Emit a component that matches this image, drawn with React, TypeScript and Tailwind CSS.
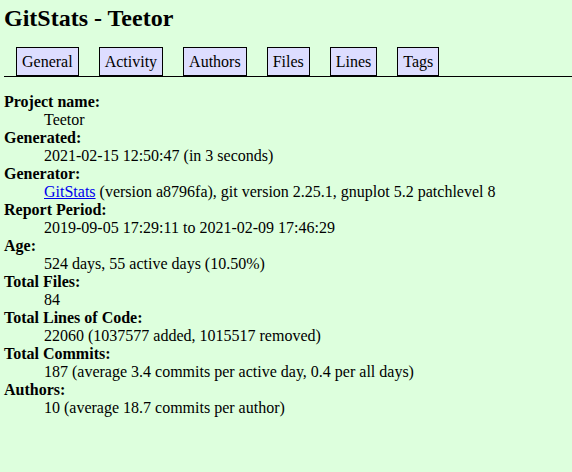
import React from "react";

const tabs = ["General", "Activity", "Authors", "Files", "Lines", "Tags"];

const Link = () => (
  <a href="#gitstats" className="text-[#0000ee] underline">
    GitStats
  </a>
);

const facts: { label: string; value: React.ReactNode }[] = [
  { label: "Project name:", value: "Teetor" },
  { label: "Generated:", value: "2021-02-15 12:50:47 (in 3 seconds)" },
  {
    label: "Generator:",
    value: (
      <>
        <Link /> (version a8796fa), git version 2.25.1, gnuplot 5.2 patchlevel 8
      </>
    ),
  },
  { label: "Report Period:", value: "2019-09-05 17:29:11 to 2021-02-09 17:46:29" },
  { label: "Age:", value: "524 days, 55 active days (10.50%)" },
  { label: "Total Files:", value: "84" },
  { label: "Total Lines of Code:", value: "22060 (1037577 added, 1015517 removed)" },
  { label: "Total Commits:", value: "187 (average 3.4 commits per active day, 0.4 per all days)" },
  { label: "Authors:", value: "10 (average 18.7 commits per author)" },
];

export default function App() {
  return (
    <div className="min-h-screen bg-[#ddffdd] pt-1 font-['Liberation_Serif',serif] text-base text-black">
      <h1 className="px-1 text-2xl leading-7 font-bold">GitStats - Teetor</h1>
      <nav className="mt-[15px] ml-1 border-b border-black pl-3">
        <ul className="flex flex-wrap gap-5">
          {tabs.map((tab) => (
            <li key={tab}>
              <a
                href={`#${tab.toLowerCase()}`}
                className="block border border-black bg-[#ddddff] px-[5px] py-1 leading-[19px] text-black"
              >
                {tab}
              </a>
            </li>
          ))}
        </ul>
      </nav>
      <dl className="mt-4 px-1 leading-[18px]">
        {facts.map(({ label, value }) => (
          <React.Fragment key={label}>
            <dt className="font-bold">{label}</dt>
            <dd className="ml-10">{value}</dd>
          </React.Fragment>
        ))}
      </dl>
    </div>
  );
}
